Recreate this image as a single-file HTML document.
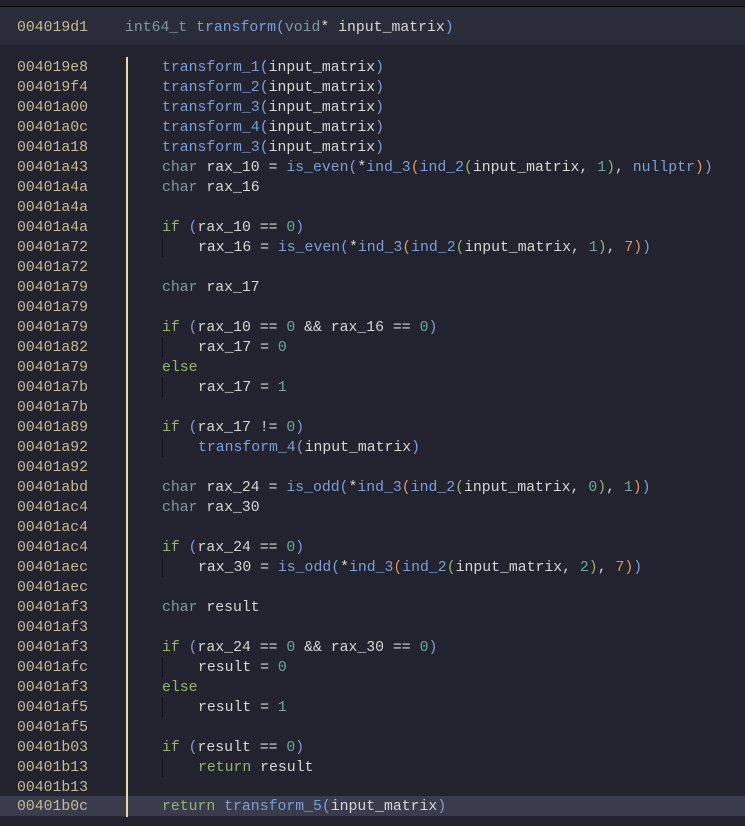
<!DOCTYPE html>
<html><head><meta charset="utf-8"><style>
html,body{margin:0;padding:0;}
body{width:745px;height:826px;background:#22232e;position:relative;overflow:hidden;font-family:"Liberation Mono",monospace;font-size:14.8px;color:#d6d6d6;}
.top{position:absolute;left:0;top:0;width:745px;height:6px;background:#1f2029;}
.sep{position:absolute;left:0;top:6px;width:745px;height:1px;background:#050507;}
.hdr{position:absolute;left:0;top:7px;width:745px;height:38px;background:#2b2c39;}
.r{position:absolute;left:0;height:20px;line-height:22px;white-space:pre;width:745px;}
.a{position:absolute;left:17px;color:#c6bb96;}
.c{position:absolute;left:162px;}
.hl{background:#3a3b4d;}
.vl{position:absolute;left:126px;top:57px;width:1.5px;height:760px;background:#e6d9a4;}
.g{position:absolute;left:162px;width:1px;height:20px;background:#0e0f14;}
.t{color:#7e99a1}.f{color:#7c9ed6}.k{color:#95b46d}.n{color:#6fa69c}.o{color:#e49560}.gr{color:#8fb56e}.b{color:#7c9ed6}
</style></head><body>
<div class="top"></div><div class="sep"></div><div class="hdr"></div>
<div class="r" style="top:17px"><span class="a">004019d1</span><span style="position:absolute;left:125px"><span class="t">int64_t</span> <span class="f">transform</span><span class="b">(</span><span class="t">void</span>* input_matrix<span class="b">)</span></span></div>

<div class="r" style="top:57px"><span class="a">004019e8</span><span class="c"><span class="f">transform_1</span><span class="b">(</span>input_matrix<span class="b">)</span></span></div>
<div class="r" style="top:77px"><span class="a">004019f4</span><span class="c"><span class="f">transform_2</span><span class="b">(</span>input_matrix<span class="b">)</span></span></div>
<div class="r" style="top:97px"><span class="a">00401a00</span><span class="c"><span class="f">transform_3</span><span class="b">(</span>input_matrix<span class="b">)</span></span></div>
<div class="r" style="top:117px"><span class="a">00401a0c</span><span class="c"><span class="f">transform_4</span><span class="b">(</span>input_matrix<span class="b">)</span></span></div>
<div class="r" style="top:137px"><span class="a">00401a18</span><span class="c"><span class="f">transform_3</span><span class="b">(</span>input_matrix<span class="b">)</span></span></div>
<div class="r" style="top:157px"><span class="a">00401a43</span><span class="c"><span class="t">char</span> rax_10 = <span class="f">is_even</span><span class="b">(</span>*<span class="f">ind_3</span><span class="o">(</span><span class="f">ind_2</span><span class="gr">(</span>input_matrix, <span class="n">1</span><span class="gr">)</span>, <span class="f">nullptr</span><span class="o">)</span><span class="b">)</span></span></div>
<div class="r" style="top:177px"><span class="a">00401a4a</span><span class="c"><span class="t">char</span> rax_16</span></div>
<div class="r" style="top:197px"><span class="a">00401a4a</span></div>
<div class="r" style="top:217px"><span class="a">00401a4a</span><span class="c"><span class="k">if</span> <span class="b">(</span>rax_10 == <span class="n">0</span><span class="b">)</span></span></div>
<div class="r" style="top:237px"><span class="a">00401a72</span><span class="g"></span><span class="c" style="left:198px">rax_16 = <span class="f">is_even</span><span class="b">(</span>*<span class="f">ind_3</span><span class="o">(</span><span class="f">ind_2</span><span class="gr">(</span>input_matrix, <span class="n">1</span><span class="gr">)</span>, <span class="o">7</span><span class="o">)</span><span class="b">)</span></span></div>
<div class="r" style="top:257px"><span class="a">00401a72</span></div>
<div class="r" style="top:277px"><span class="a">00401a79</span><span class="c"><span class="t">char</span> rax_17</span></div>
<div class="r" style="top:297px"><span class="a">00401a79</span></div>
<div class="r" style="top:317px"><span class="a">00401a79</span><span class="c"><span class="k">if</span> <span class="b">(</span>rax_10 == <span class="n">0</span> &amp;&amp; rax_16 == <span class="n">0</span><span class="b">)</span></span></div>
<div class="r" style="top:337px"><span class="a">00401a82</span><span class="g"></span><span class="c" style="left:198px">rax_17 = <span class="n">0</span></span></div>
<div class="r" style="top:357px"><span class="a">00401a79</span><span class="c"><span class="k">else</span></span></div>
<div class="r" style="top:377px"><span class="a">00401a7b</span><span class="g"></span><span class="c" style="left:198px">rax_17 = <span class="n">1</span></span></div>
<div class="r" style="top:397px"><span class="a">00401a7b</span></div>
<div class="r" style="top:417px"><span class="a">00401a89</span><span class="c"><span class="k">if</span> <span class="b">(</span>rax_17 != <span class="n">0</span><span class="b">)</span></span></div>
<div class="r" style="top:437px"><span class="a">00401a92</span><span class="g"></span><span class="c" style="left:198px"><span class="f">transform_4</span><span class="b">(</span>input_matrix<span class="b">)</span></span></div>
<div class="r" style="top:457px"><span class="a">00401a92</span></div>
<div class="r" style="top:477px"><span class="a">00401abd</span><span class="c"><span class="t">char</span> rax_24 = <span class="f">is_odd</span><span class="b">(</span>*<span class="f">ind_3</span><span class="o">(</span><span class="f">ind_2</span><span class="gr">(</span>input_matrix, <span class="n">0</span><span class="gr">)</span>, <span class="n">1</span><span class="o">)</span><span class="b">)</span></span></div>
<div class="r" style="top:497px"><span class="a">00401ac4</span><span class="c"><span class="t">char</span> rax_30</span></div>
<div class="r" style="top:517px"><span class="a">00401ac4</span></div>
<div class="r" style="top:537px"><span class="a">00401ac4</span><span class="c"><span class="k">if</span> <span class="b">(</span>rax_24 == <span class="n">0</span><span class="b">)</span></span></div>
<div class="r" style="top:557px"><span class="a">00401aec</span><span class="g"></span><span class="c" style="left:198px">rax_30 = <span class="f">is_odd</span><span class="b">(</span>*<span class="f">ind_3</span><span class="o">(</span><span class="f">ind_2</span><span class="gr">(</span>input_matrix, <span class="n">2</span><span class="gr">)</span>, <span class="o">7</span><span class="o">)</span><span class="b">)</span></span></div>
<div class="r" style="top:577px"><span class="a">00401aec</span></div>
<div class="r" style="top:597px"><span class="a">00401af3</span><span class="c"><span class="t">char</span> result</span></div>
<div class="r" style="top:617px"><span class="a">00401af3</span></div>
<div class="r" style="top:637px"><span class="a">00401af3</span><span class="c"><span class="k">if</span> <span class="b">(</span>rax_24 == <span class="n">0</span> &amp;&amp; rax_30 == <span class="n">0</span><span class="b">)</span></span></div>
<div class="r" style="top:657px"><span class="a">00401afc</span><span class="g"></span><span class="c" style="left:198px">result = <span class="n">0</span></span></div>
<div class="r" style="top:677px"><span class="a">00401af3</span><span class="c"><span class="k">else</span></span></div>
<div class="r" style="top:697px"><span class="a">00401af5</span><span class="g"></span><span class="c" style="left:198px">result = <span class="n">1</span></span></div>
<div class="r" style="top:717px"><span class="a">00401af5</span></div>
<div class="r" style="top:737px"><span class="a">00401b03</span><span class="c"><span class="k">if</span> <span class="b">(</span>result == <span class="n">0</span><span class="b">)</span></span></div>
<div class="r" style="top:757px"><span class="a">00401b13</span><span class="g"></span><span class="c" style="left:198px"><span class="k">return</span> result</span></div>
<div class="r" style="top:777px"><span class="a">00401b13</span></div>
<div class="r hl" style="top:796px"><span class="a">00401b0c</span><span class="c"><span class="k">return</span> <span class="f">transform_5</span><span class="b">(</span>input_matrix<span class="b">)</span></span></div>
<div class="vl"></div>
</body></html>
